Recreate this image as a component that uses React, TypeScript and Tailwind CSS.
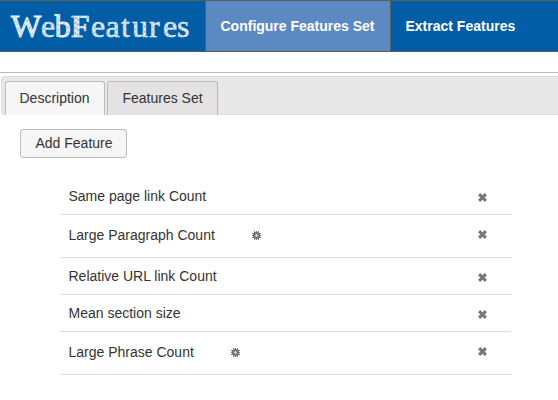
const features = [
  { name: 'Same page link Count', row: 'h-[38px] pt-[2px]', text: 'w-[148px]', gear: false },
  { name: 'Large Paragraph Count', row: 'h-[43px] pb-[2px]', text: 'w-[182px]', gear: true },
  { name: 'Relative URL link Count', row: 'h-[37px] pt-[1px]', text: 'w-[182px]', gear: false },
  { name: 'Mean section size', row: 'h-[37px] pt-[1px]', text: 'w-[182px]', gear: false },
  { name: 'Large Phrase Count', row: 'h-[43px] pb-[2px]', text: 'w-[161px]', gear: true },
];

function Logo() {
  return (
    <svg width="205" height="50" viewBox="0 0 205 50" aria-label="WebFeatures">
      <defs>
        <pattern id="chalk" width="4" height="3" patternUnits="userSpaceOnUse" patternTransform="rotate(-52)">
          <rect width="4" height="3" fill="#eef5fb" />
          <path d="M0 1h2.5" stroke="#4f91c5" strokeWidth="1.2" />
        </pattern>
      </defs>
      <text x="11 41 54.8 71 91 105.5 121 132 149 163 177" y="36" fontFamily="'Liberation Serif', serif" fontSize="32" fontWeight="400" fill="url(#chalk)" stroke="#e9f2fa" strokeWidth="0.5"><tspan strokeWidth="1">W</tspan>e<tspan strokeWidth="1">b</tspan><tspan fontWeight="700" fontSize="31">F</tspan>eatures</text>
    </svg>
  );
}

function Gear() {
  return (
    <svg className="block" width="9" height="9" viewBox="0 0 9 9">
      <path d="M2 0h1v1h1V0h1v1h1V0h1v2h2v1H8v1h1v1H8v1h1v1H7v2H6V8H5v1H4V8H3v1H2V7H0V6h1V5H0V4h1V3H0V2h2z" fill="#777" />
      <rect x="3.5" y="3.5" width="2" height="2" fill="#fff" />
    </svg>
  );
}

function Cross() {
  return (
    <svg className="block" width="9" height="9" viewBox="0 0 9 9">
      <path d="M1.1 1.1l6.8 6.8M7.9 1.1l-6.8 6.8" stroke="#777" strokeWidth="3" />
    </svg>
  );
}

export default function App() {
  return (
    <div className="h-[400px] w-[558px] overflow-hidden bg-white font-['Liberation_Sans',Arial,sans-serif] text-[14px] text-[#333]">
      <header className="flex h-[52px] border-y border-[#5c5c5c] bg-[#005da6] font-bold text-white">
        <div className="w-[205px] shrink-0"><Logo /></div>
        <nav className="flex">
          <a className="flex w-[186px] items-center border-x border-[#5c5c5c] bg-[#5b89c1] pt-[1px] pl-[14.5px] whitespace-nowrap">Configure Features Set</a>
          <a className="flex items-center pt-[1px] pl-[14.5px] whitespace-nowrap">Extract Features</a>
        </nav>
      </header>
      <div className="mt-5 border-t border-[#bbb]" />
      <div className="mt-[3px] ml-px flex h-[39px] gap-[2px] rounded-l-[4px] border border-r-0 border-[#ddd] bg-[#e8e8e8] pt-1 pl-[3px]">
        <div className="flex h-[34px] w-[100px] items-center rounded-t-[3px] border border-b-0 border-[#bbb] bg-[#f6f6f6] pl-[13.5px]">Description</div>
        <div className="flex h-[34px] w-[111px] items-center justify-center rounded-t-[3px] border border-b-0 border-[#bbb] bg-[#e4e2e3]">Features Set</div>
      </div>
      <button className="mt-[14px] ml-5 flex h-[29px] w-[107px] items-center justify-center rounded-[3px] border border-[#bbb] bg-[#f6f6f6] pl-[1px]">Add Feature</button>
      <ul className="mt-[19px] ml-[60px] w-[451px]">
        {features.map((f) => (
          <li key={f.name} className={`flex items-center border-b border-[#ddd] pr-6 pl-[8.5px] ${f.row}`}>
            <span className={`whitespace-nowrap ${f.text}`}>{f.name}</span>
            {f.gear && <span className="pt-[1px] pl-[1.5px]"><Gear /></span>}
            <span className={f.gear ? 'ml-auto pb-[1px]' : 'ml-auto pt-[2px]'}><Cross /></span>
          </li>
        ))}
      </ul>
    </div>
  );
}
